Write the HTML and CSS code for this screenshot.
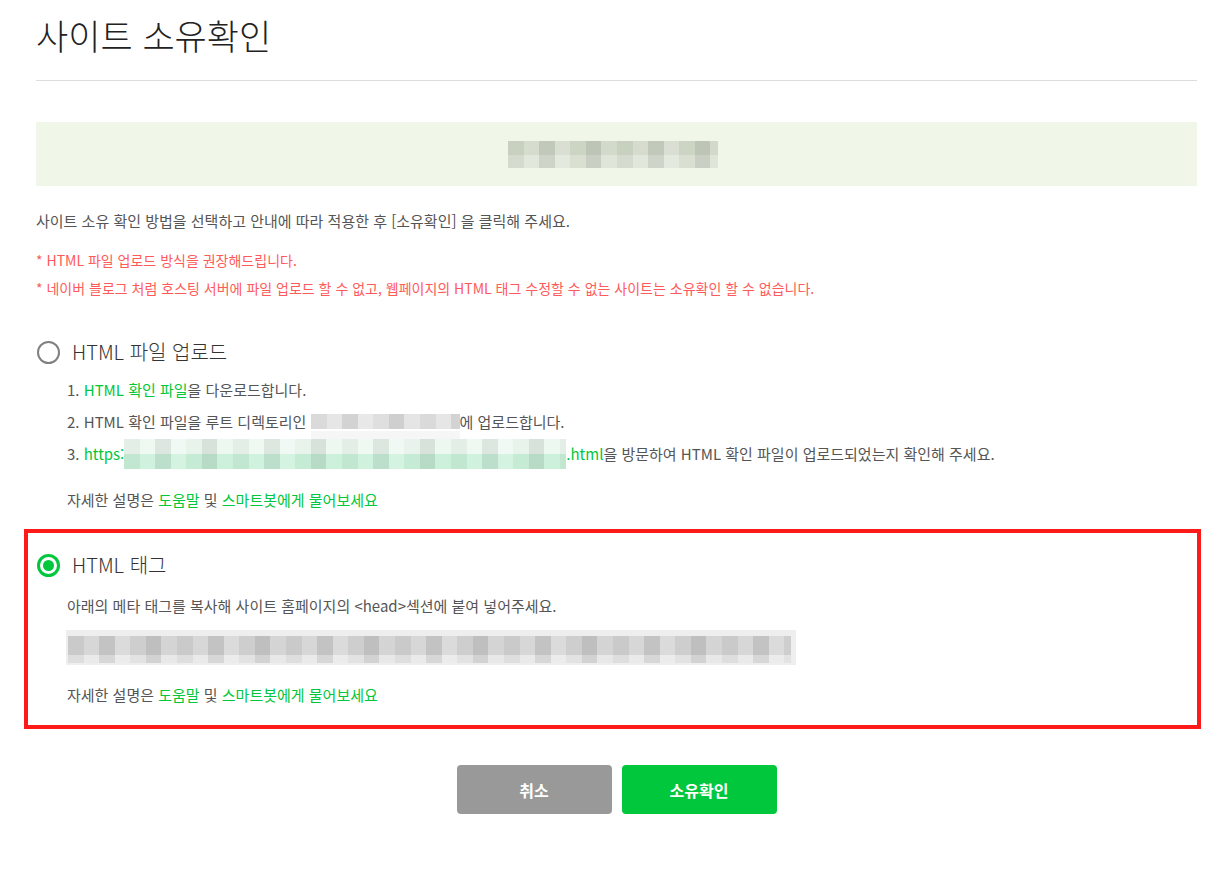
FILE: index.html
```html
<!DOCTYPE html>
<html lang="ko">
<head>
	<meta charset="UTF-8">
	<meta name="viewport" content="width=device-width, initial-scale=1.0">
	<title>사이트 소유확인</title>
	<link rel="stylesheet" href="styles.css">
</head>
<body>
	<main class="page">

		<!-- HEADER --------------------------------- -->
		<h1 class="page-title">사이트 소유확인</h1>

		<div class="site-box">
			<span class="mosaic mosaic-site"></span>
		</div>

		<p class="guide">사이트 소유 확인 방법을 선택하고 안내에 따라 적용한 후 [소유확인] 을 클릭해 주세요.</p>
		<p class="notice notice-first">* HTML 파일 업로드 방식을 권장해드립니다.</p>
		<p class="notice">* 네이버 블로그 처럼 호스팅 서버에 파일 업로드 할 수 없고, 웹페이지의 HTML 태그 수정할 수 없는 사이트는 소유확인 할 수 없습니다.</p>

		<!-- HTML FILE --------------------------------- -->
		<section class="method">
			<div class="method-title"><span class="radio"></span>HTML 파일 업로드</div>
			<ol class="steps">
				<li>1. <a href="#">HTML 확인 파일</a>을 다운로드합니다.</li>
				<li>2. HTML 확인 파일을 루트 디렉토리인 <span class="mosaic mosaic-dir"></span>에 업로드합니다.</li>
				<li>3. <a href="#">https:<span class="mosaic mosaic-url"></span>.html</a>을 방문하여 HTML 확인 파일이 업로드되었는지 확인해 주세요.</li>
			</ol>
			<p class="help">자세한 설명은 <a href="#">도움말</a> 및 <a href="#">스마트봇에게 물어보세요</a></p>
		</section>

		<!-- HTML TAG --------------------------------- -->
		<section class="method method-selected">
			<div class="method-title"><span class="radio radio-on"></span>HTML 태그</div>
			<p class="method-desc">아래의 메타 태그를 복사해 사이트 홈페이지의 &lt;head&gt;섹션에 붙여 넣어주세요.</p>
			<div class="meta-box">
				<span class="mosaic mosaic-meta"></span>
			</div>
			<p class="help">자세한 설명은 <a href="#">도움말</a> 및 <a href="#">스마트봇에게 물어보세요</a></p>
		</section>

		<!-- ACTIONS --------------------------------- -->
		<div class="actions">
			<button class="btn btn-cancel" type="button">취소</button>
			<button class="btn btn-ok" type="button">소유확인</button>
		</div>

	</main>
</body>
</html>
```

FILE: styles.css
```css
/* GENERAL --------------------------------- */
* {
	box-sizing: border-box;
}
html,
body {
	margin: 0;
	padding: 0;
	background: #fff;
}
body {
	font-family: 'Noto Sans CJK KR', 'Noto Sans', sans-serif;
	color: #555;
}
p {
	margin: 0;
}
a {
	color: #00c73c;
	text-decoration: none;
}
.page {
	margin: 0 32px 0 36px;
	display: flex;
	flex-direction: column;
}

/* HEADER --------------------------------- */
.page-title {
	margin: 0;
	padding: 16px 0 26px;
	font-size: 35px;
	line-height: 38px;
	font-weight: 300;
	color: #222;
	border-bottom: 1px solid #ddd;
}
.site-box {
	margin-top: 41px;
	height: 64px;
	background-color: #f0f6e8;
	display: flex;
	align-items: center;
	justify-content: center;
}
.guide {
	margin-top: 25px;
	font-size: 15px;
	line-height: 20px;
	color: #555;
}
.notice {
	margin-top: 8px;
	font-size: 14px;
	line-height: 20px;
	color: #ff5a5a;
}
.notice-first {
	margin-top: 19px;
}

/* BLURRED VALUES --------------------------------- */
.mosaic {
	display: inline-block;
	background-image:
		repeating-linear-gradient(90deg,
			rgba(0, 0, 0, 0.04) 0 16px,
			rgba(255, 255, 255, 0.12) 16px 31px,
			rgba(0, 0, 0, 0.07) 31px 47px,
			rgba(255, 255, 255, 0.2) 47px 62px,
			rgba(0, 0, 0, 0.02) 62px 78px,
			rgba(0, 0, 0, 0.09) 78px 93px,
			rgba(255, 255, 255, 0.06) 93px 109px),
		linear-gradient(180deg, var(--top) 0 var(--split), var(--bottom) var(--split) 100%);
}
.mosaic-site {
	--top: #d0d8c8;
	--bottom: #dde4d6;
	--split: 52%;
	width: 210px;
	height: 27px;
	margin-right: 8px;
}
.mosaic-dir {
	--top: #e3e3e3;
	--bottom: #e3e3e3;
	--split: 100%;
	width: 149px;
	height: 15px;
	vertical-align: -1px;
	box-shadow: 0 17px 0 #f6f6f6;
}
.mosaic-url {
	--top: #ecf8f0;
	--bottom: #c9f0d9;
	--split: 50%;
	width: 442px;
	height: 30px;
	vertical-align: -9px;
}
.mosaic-meta {
	--top: #d2d2d2;
	--bottom: #e7e7e7;
	--split: 70%;
	display: block;
	height: 27px;
}

/* METHODS --------------------------------- */
.method {
	margin-top: 22px;
	padding: 20px 0 19px 1px;
}
.method-selected {
	margin: 0 -4px 0 -12px;
	padding: 20px 4px 20px 9px;
	border: 4px solid #ff1a1a;
}
.method-title {
	display: flex;
	align-items: center;
	gap: 12px;
	font-size: 20px;
	line-height: 24px;
	font-weight: 300;
	color: #333;
}
.radio {
	width: 23px;
	height: 23px;
	border: 2px solid #808080;
	border-radius: 50%;
	display: inline-flex;
	align-items: center;
	justify-content: center;
}
.radio-on {
	border: 3px solid #00c73c;
}
.radio-on::after {
	content: '';
	width: 11px;
	height: 11px;
	border-radius: 50%;
	background-color: #00c73c;
}
.steps {
	list-style: none;
	margin: 10px 0 0;
	padding: 0 0 0 30px;
	font-size: 15px;
	line-height: 32px;
}
.help {
	margin-top: 20px;
	padding-left: 30px;
	font-size: 15px;
	line-height: 20px;
}
.method-desc {
	margin-top: 19px;
	padding-left: 30px;
	font-size: 15px;
	line-height: 20px;
}
.meta-box {
	margin: 14px 0 0 29px;
	width: 730px;
	height: 35px;
	padding: 6px 5px 2px 2px;
	background-color: #eee;
}

/* ACTIONS --------------------------------- */
.actions {
	margin-top: 36px;
	display: flex;
	justify-content: center;
	gap: 10px;
}
.btn {
	width: 155px;
	height: 49px;
	border: 0;
	border-radius: 4px;
	font-family: inherit;
	font-size: 16px;
	font-weight: 700;
	color: #fff;
	cursor: pointer;
}
.btn-cancel {
	background-color: #999;
}
.btn-ok {
	background-color: #00c73c;
}
```
